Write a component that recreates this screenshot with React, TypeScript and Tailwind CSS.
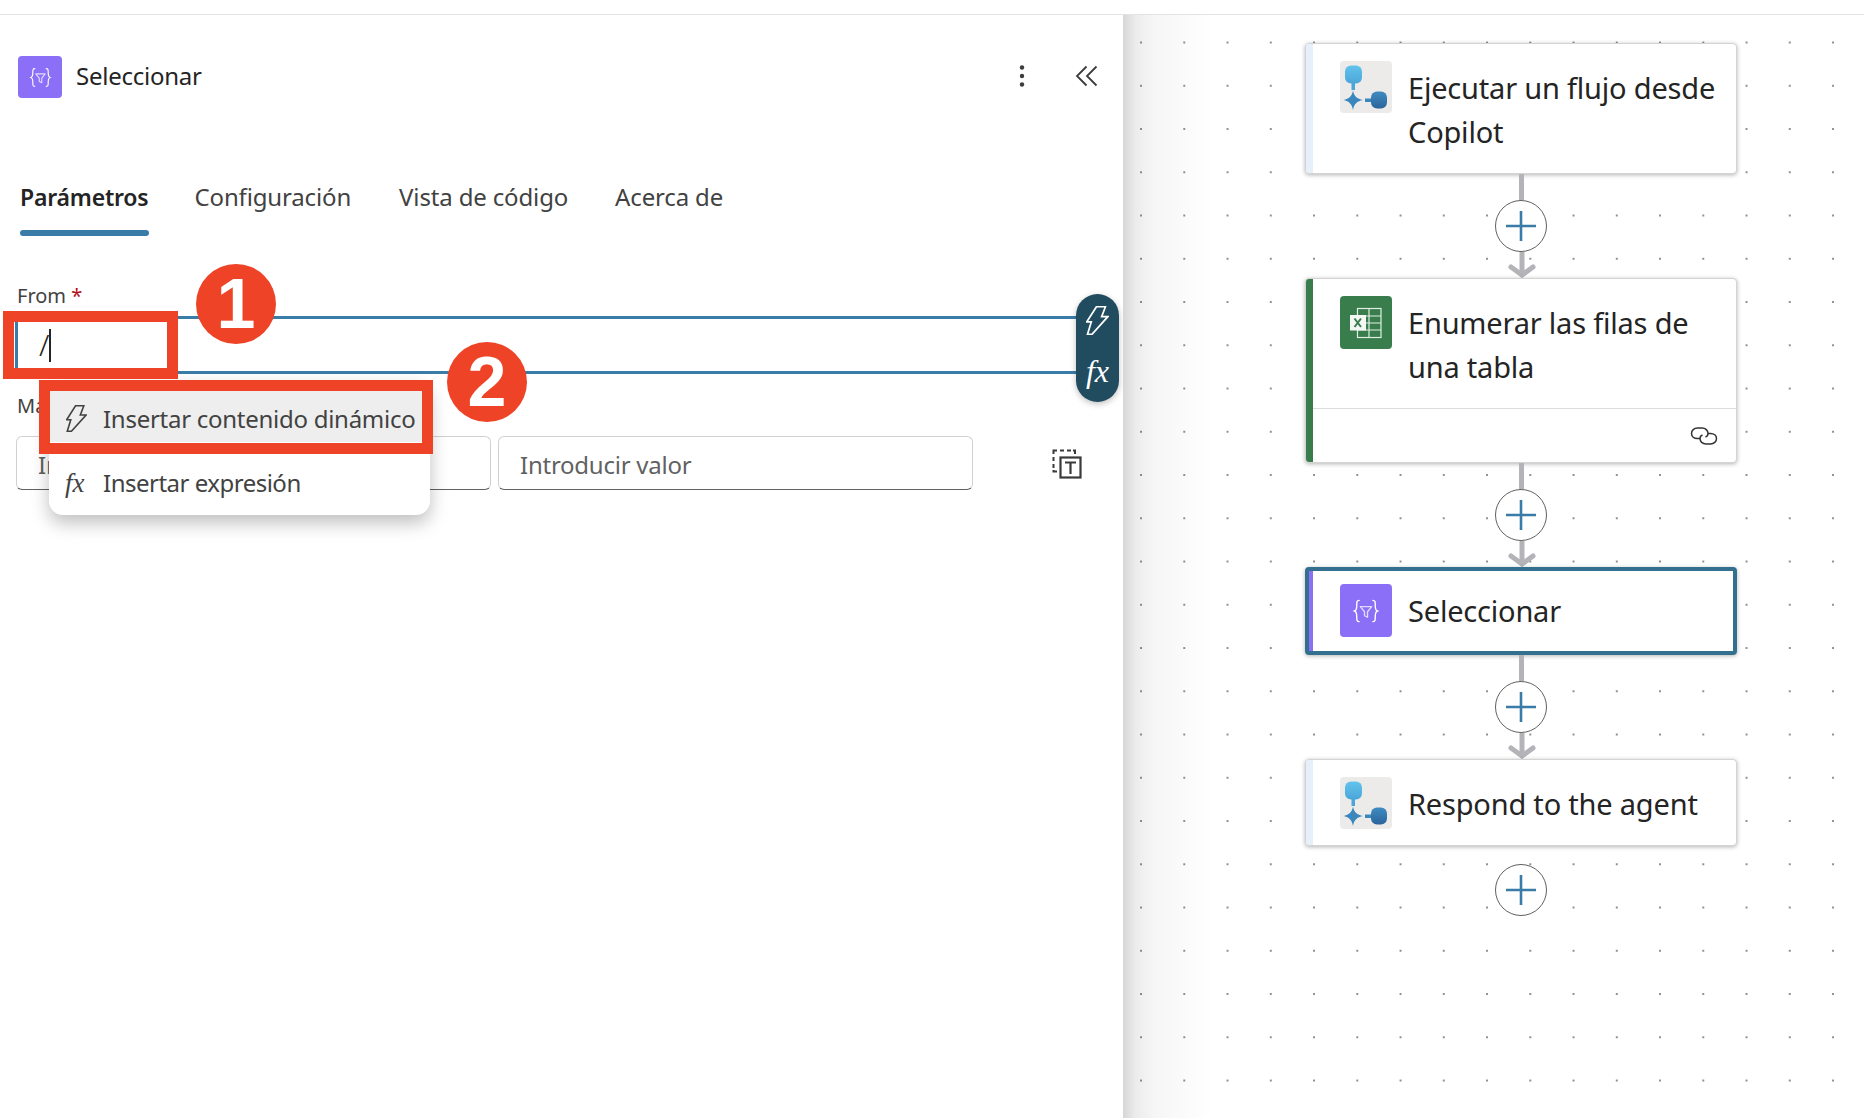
const BlueLine = "bg-[#3a7ca8]";

function FlowIcon() {
  return (
    <div className="h-[52px] w-[52px] shrink-0 rounded-[4px] bg-[#edebe9]">
      <svg width="52" height="52" viewBox="0 0 52 52">
        <defs>
          <linearGradient id="fa" x1="0" y1="0" x2="0" y2="1"><stop offset="0" stopColor="#62c3ec" /><stop offset="1" stopColor="#4ba6d8" /></linearGradient>
          <linearGradient id="fb" x1="0" y1="0" x2="0" y2="1"><stop offset="0" stopColor="#3f8bc0" /><stop offset="1" stopColor="#2a659c" /></linearGradient>
        </defs>
        <rect x="5" y="4.5" width="17" height="18" rx="6" fill="url(#fa)" />
        <rect x="11.5" y="22" width="3.5" height="7" fill="#4ba6d8" />
        <path d="M13 29.5 C14 35 17 38 23 39 C17 40 14 43 13 49 C12 43 9 40 3.5 39 C9 38 12 35 13 29.5Z" fill="#3b86bd" />
        <rect x="25" y="37.5" width="6.5" height="3.5" fill="#3b86bd" />
        <rect x="31" y="30.5" width="16" height="17" rx="6" fill="url(#fb)" />
      </svg>
    </div>
  );
}

function ExcelIcon() {
  return (
    <div className="h-[53px] w-[52px] shrink-0 rounded-[4px] bg-[#3a7d4c]">
      <svg width="52" height="53" viewBox="0 0 52 53">
        <g fill="none" stroke="#dfeee3" strokeWidth="1.2">
          <rect x="17.5" y="12.5" width="23.5" height="29" />
          <path d="M29 12.5V41.5M17.5 20H41M17.5 27H41M17.5 34H41" />
        </g>
        <rect x="10" y="19" width="16" height="15.5" fill="#f4f8f5" />
        <path d="M14.5 22.5L21 31M21 22.5L14.5 31" stroke="#3a7d4c" strokeWidth="2" />
      </svg>
    </div>
  );
}

function SelectGlyph({ size }: { size: number }) {
  return (
    <svg width={size} height={size} viewBox="0 0 24 24" fill="none">
      <path d="M6.5 3.5C4.5 3.5 4.6 5 4.6 7.5C4.6 10 4.4 11.4 2.8 12C4.4 12.6 4.6 14 4.6 16.5C4.6 19 4.5 20.5 6.5 20.5" stroke="#fff" strokeWidth="1.1" strokeLinecap="round" />
      <path d="M17.5 3.5C19.5 3.5 19.4 5 19.4 7.5C19.4 10 19.6 11.4 21.2 12C19.6 12.6 19.4 14 19.4 16.5C19.4 19 19.5 20.5 17.5 20.5" stroke="#fff" strokeWidth="1.1" strokeLinecap="round" />
      <path d="M7.5 8.5H16.5L13.2 12.6V17L10.8 15.8V12.6Z" stroke="#e1d8ff" strokeWidth="1.1" strokeLinejoin="round" />
    </svg>
  );
}

function SelectIcon() {
  return (
    <div className="flex h-[53px] w-[52px] shrink-0 items-center justify-center rounded-[4px] bg-[#8b6ff6]">
      <SelectGlyph size={30} />
    </div>
  );
}

function Bolt({ color, w, h }: { color: string; w: number; h: number }) {
  return (
    <svg width={w} height={h} viewBox="0 0 66 84" fill="none">
      <path d="M30 2H56L45 31H63L17 82H4L15 46H2Z" stroke={color} strokeWidth="5" strokeLinejoin="miter" />
    </svg>
  );
}

function Connector({ arrow = true }: { arrow?: boolean }) {
  return (
    <div className="flex w-[432px] flex-col items-center">
      {arrow && <div className="ml-[1px] h-[26px] w-[5px] bg-[#b4b4b8]" />}
      {!arrow && <div className="h-[18px]" />}
      <button className="flex h-[52px] w-[52px] items-center justify-center rounded-full border border-[#616161] bg-white">
        <svg width="32" height="32" viewBox="0 0 32 32">
          <path d="M16 1V31M1 16H31" stroke="#3a7ca8" strokeWidth="2.6" />
        </svg>
      </button>
      {arrow && (
        <svg className="ml-[1px]" width="28" height="26" viewBox="0 0 28 26" fill="none">
          <path d="M14 0V24" stroke="#b4b4b8" strokeWidth="5" />
          <path d="M3 15L14 23L25 15" stroke="#b4b4b8" strokeWidth="5" strokeLinecap="round" />
        </svg>
      )}
    </div>
  );
}

function Node({ accent, icon, title, h, selected, footer }: { accent: string; icon: React.ReactNode; title: React.ReactNode; h: string; selected?: boolean; footer?: boolean }) {
  return (
    <div className={`flex w-[432px] overflow-hidden rounded-[4px] bg-white ${h} ${selected ? "border-[4px] border-[#33708f] shadow-[0_1px_4px_rgba(0,0,0,0.3)]" : "border border-[#d4d4d4] shadow-[0_1px_4px_rgba(0,0,0,0.3)]"}`}>
      <div className={`${selected ? "w-[4px]" : "w-[7px]"} shrink-0 ${accent}`} />
      <div className="flex min-w-0 flex-1 flex-col">
        <div className={`flex flex-1 pl-[27px] ${selected ? "pt-[13px]" : "pt-[17px]"}`}>
          {icon}
          <div className="ml-[16px] mt-[5px] text-[29px] leading-[43.5px] tracking-[-0.2px] text-[#242424]">{title}</div>
        </div>
        {footer && (
          <div className="flex h-[54px] items-center justify-end border-t border-[#dcdcdc] pr-[18px]">
            <svg width="28" height="20" viewBox="0 0 28 20" fill="none" stroke="#333" strokeWidth="1.5">
              <path d="M10 12.5H7.5C4 12.5 1.5 10.5 1.5 7.5C1.5 4.5 4 2 7.5 2H12C15.5 2 18 4.5 18 7.5C18 9 17 10.5 15.5 11" />
              <path d="M18 7.5H20.5C24 7.5 26.5 9.5 26.5 12.5C26.5 15.5 24 18 20.5 18H16C12.5 18 10 15.5 10 12.5C10 11 11 9.5 12.5 9" />
            </svg>
          </div>
        )}
      </div>
    </div>
  );
}

function Tab({ label, active, className }: { label: string; active?: boolean; className: string }) {
  return (
    <div className={`flex flex-col ${className}`}>
      <span className={`leading-[30px] ${active ? "text-[23px] tracking-[-0.2px] font-semibold text-[#242424]" : "text-[24px] tracking-[-0.15px] text-[#424242]"}`}>{label}</span>
      <div className={`mt-[18px] h-[6px] rounded-[3px] ${active ? BlueLine : "bg-transparent"}`} />
    </div>
  );
}

function TextField({ placeholder, className }: { placeholder: string; className: string }) {
  return (
    <div className={`flex h-[54px] w-[475px] items-center rounded-[6px] border border-[#d1d1d1] border-b-[#616161] bg-white pl-[21px] pt-[3px] text-[24px] tracking-[-0.25px] text-[#616161] ${className}`}>
      {placeholder}
    </div>
  );
}

export default function App() {
  return (
    <div className="relative flex h-[1118px] w-[1864px] flex-col overflow-hidden bg-white font-['Noto_Sans','Open_Sans',sans-serif]">
      <div className="h-[15px] shrink-0 border-b border-[#e3e3e3]" />
      <div className="flex min-h-0 flex-1">
        {/* Left panel */}
        <section className="w-[1123px] shrink-0 bg-white">
          <header className="flex items-center pl-[18px] pr-[24px] pt-[41px]">
            <div className="flex h-[42px] w-[44px] items-center justify-center rounded-[4px] bg-[#8b6ff6]">
              <SelectGlyph size={25} />
            </div>
            <h1 className="ml-[14px] flex-1 pb-[2px] text-[24px] tracking-[-0.25px] text-[#242424]">Seleccionar</h1>
            <svg className="mb-[2px]" width="6" height="24" viewBox="0 0 6 24" fill="#3c3c3c">
              <circle cx="3" cy="3.5" r="2.2" /><circle cx="3" cy="12" r="2.2" /><circle cx="3" cy="20.5" r="2.2" />
            </svg>
            <svg className="mb-[2px] ml-[50px]" width="24" height="22" viewBox="0 0 24 22" fill="none" stroke="#3c3c3c" strokeWidth="1.8">
              <path d="M11.5 1.5L2 11L11.5 20.5M21.5 1.5L12 11L21.5 20.5" />
            </svg>
          </header>

          <nav className="mt-[84px] flex pl-[20px]">
            <Tab label="Parámetros" active className="" />
            <Tab label="Configuración" className="ml-[46px]" />
            <Tab label="Vista de código" className="ml-[48px]" />
            <Tab label="Acerca de" className="ml-[47px]" />
          </nav>

          <div className="mt-[48px] pl-[17px] text-[20px] leading-[24px] text-[#424242]">
            From <span className="text-[#b10e1c]">*</span>
          </div>

          <div className="relative ml-[15px] mt-[8px] flex h-[58px] w-[1063px] items-center border-y-[3px] border-l-[3px] border-[#3a7ca8] bg-white pl-[21px]">
            <span className="text-[30px] font-light leading-none text-[#242424]">/</span>
            <span className="h-[33px] w-[2px] bg-[#242424]" />
            <div className="absolute left-[1058px] top-[-25px] flex h-[108px] w-[43px] flex-col items-center rounded-full bg-[#214b5e] pt-[12px] shadow-[0_2px_6px_rgba(0,0,0,0.25)]">
              <Bolt color="#ffffff" w={23} h={29} />
              <span className="mt-[18px] font-['Liberation_Serif',serif] text-[32px] italic leading-[36px] text-white">fx</span>
            </div>
          </div>

          <div className="mt-[20px] pl-[17px] text-[20px] leading-[24px] text-[#424242]">Map</div>

          <div className="mt-[18px] flex items-center pl-[16px]">
            <TextField placeholder="Introducir clave" className="" />
            <TextField placeholder="Introducir valor" className="ml-[7px]" />
            <svg className="ml-[79px] mt-[2px]" width="30" height="30" viewBox="0 0 30 30" fill="none" stroke="#3a3a3a">
              <path d="M5 1.5H1.5V5M1.5 8V12M1.5 15V19M1.5 21V22.5H5M8 1.5H12M15 1.5H19M21 1.5H23V5" strokeWidth="2" />
              <rect x="8.5" y="8.5" width="20" height="20" strokeWidth="2.2" />
              <path d="M13 13.5H24M18.5 13.5V25" strokeWidth="2.2" />
            </svg>
          </div>
        </section>

        {/* Canvas */}
        <main className="relative flex-1 bg-white bg-[radial-gradient(circle,#8f8f8f_1px,transparent_1.4px)] bg-[length:43.25px_43.25px] bg-[position:-3.6px_5.9px] pl-[182px] pt-[28px]">
          <div className="absolute inset-y-0 left-0 w-[90px] bg-[linear-gradient(to_right,rgba(0,0,0,0.16)_0%,rgba(0,0,0,0.075)_14%,rgba(0,0,0,0.035)_35%,rgba(0,0,0,0)_100%)]" />
          <div className="relative flex flex-col">
            <Node accent="bg-[#e6f0fa]" icon={<FlowIcon />} h="h-[131px]" title={<>Ejecutar un flujo desde<br />Copilot</>} />
            <Connector />
            <Node accent="bg-[#3a7d4c]" icon={<ExcelIcon />} h="h-[185px]" footer title={<>Enumerar las filas de<br />una tabla</>} />
            <Connector />
            <Node accent="bg-[#8b6ff6]" icon={<SelectIcon />} h="h-[88px]" selected title="Seleccionar" />
            <Connector />
            <Node accent="bg-[#e6f0fa]" icon={<FlowIcon />} h="h-[87px]" title="Respond to the agent" />
            <Connector arrow={false} />
          </div>
        </main>
      </div>

      {/* Annotation overlay: menu and red call-outs */}
      <div className="absolute left-[49px] top-[380px] w-[381px] rounded-[14px] bg-white pt-[11px] text-[#424242] shadow-[0_8px_18px_rgba(0,0,0,0.25)]">
        <div className="flex h-[51px] items-center bg-[#eeeeee] pl-[17px] pt-[4px]">
          <Bolt color="#424242" w={21} h={27} />
          <span className="ml-[16px] whitespace-nowrap text-[24px] tracking-[-0.27px]">Insertar contenido dinámico</span>
        </div>
        <div className="flex h-[73px] items-center pl-[16px] pt-[9px]">
          <span className="w-[23px] font-['Liberation_Serif',serif] text-[27px] italic leading-none">fx</span>
          <span className="ml-[15px] whitespace-nowrap text-[24px] tracking-[-0.5px]">Insertar expresión</span>
        </div>
      </div>
      <div className="absolute left-[3px] top-[311px] h-[68px] w-[175px] border-[11px] border-[#ee4327]" />
      <div className="absolute left-[39px] top-[380px] h-[74px] w-[394px] border-[11px] border-[#ee4327]" />
      <div className="absolute left-[196px] top-[264px] flex h-[80px] w-[80px] items-center justify-center rounded-full bg-[#ee4327] font-['Liberation_Sans',sans-serif] text-[70px] font-bold leading-none text-white">1</div>
      <div className="absolute left-[447px] top-[342px] flex h-[80px] w-[80px] items-center justify-center rounded-full bg-[#ee4327] font-['Liberation_Sans',sans-serif] text-[70px] font-bold leading-none text-white">2</div>
    </div>
  );
}
